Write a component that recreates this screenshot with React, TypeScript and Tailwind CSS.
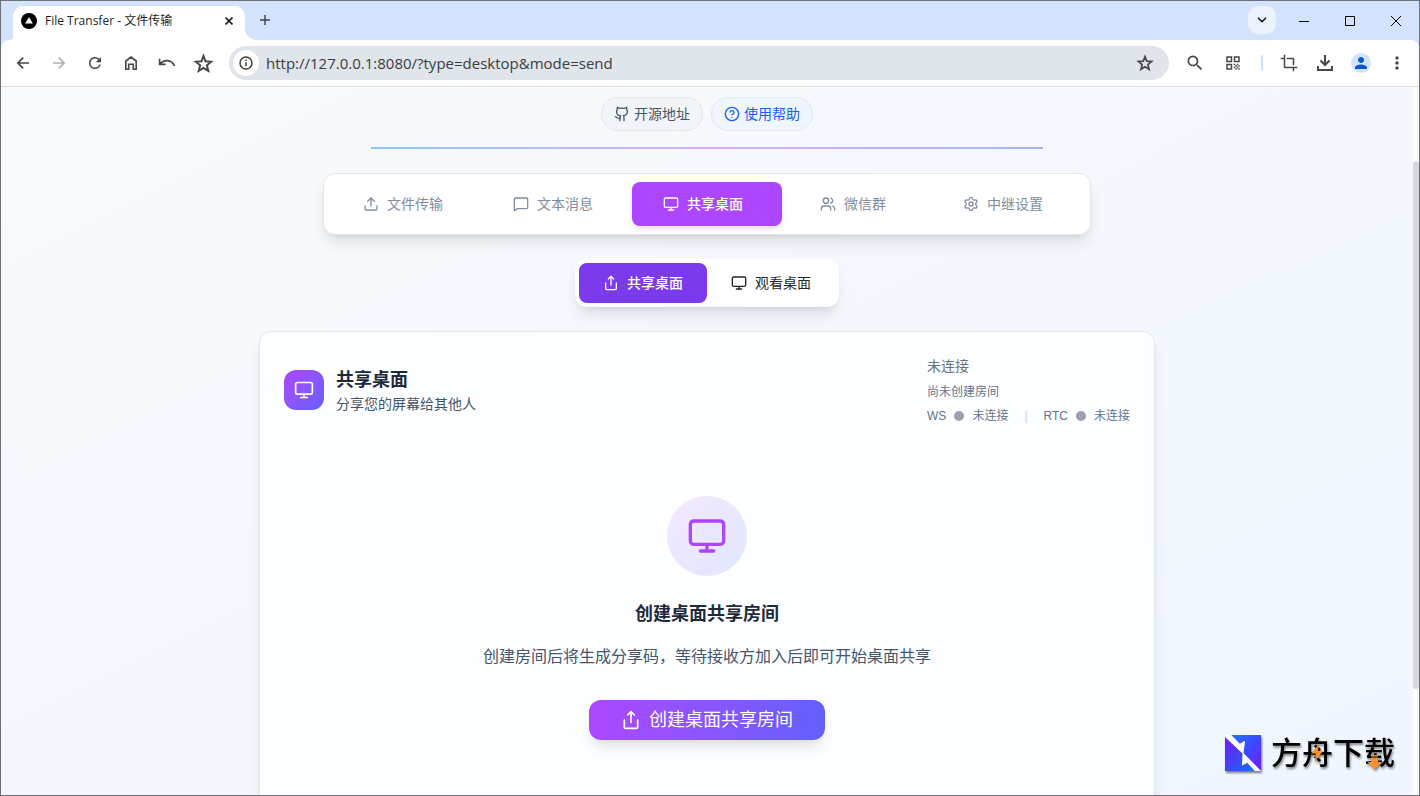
import React, { useState } from 'react';
import {
  ChevronDown,
  Github,
  HelpCircle,
  MessageSquare,
  Monitor,
  Settings,
  Share,
  Upload,
  Users,
} from 'lucide-react';
import { MdCrop, MdMoreVert, MdPerson, MdQrCode, MdRefresh, MdSearch } from 'react-icons/md';

const mainTabs = [
  { id: 'file', label: '文件传输', icon: Upload },
  { id: 'text', label: '文本消息', icon: MessageSquare },
  { id: 'desktop', label: '共享桌面', icon: Monitor },
  { id: 'wechat', label: '微信群', icon: Users },
  { id: 'relay', label: '中继设置', icon: Settings },
];

const ToolButton: React.FC<{ label: string; muted?: boolean; children: React.ReactNode }> = ({ label, muted, children }) => (
  <button
    type="button"
    aria-label={label}
    className={`flex h-8 w-9 shrink-0 items-center justify-center ${muted ? 'text-[#b0b1b3]' : 'text-[#45474a]'}`}
  >
    {children}
  </button>
);

const StarIcon: React.FC<{ className: string }> = ({ className }) => (
  <svg viewBox="0 0 18 18" className={className} fill="none" stroke="currentColor" strokeWidth="1.7">
    <path d="M9 2.600l1.750 4.500 4.850.350-3.700 3.150 1.200 4.700L9 12.700l-4.100 2.600 1.200-4.700-3.700-3.150 4.850-.350z" />
  </svg>
);

const TitleBar: React.FC = () => (
  <div className="flex h-[39px] shrink-0 items-end bg-[#d3e3fd] pl-3">
    <div className="relative flex h-[34px] w-[232px] items-center rounded-t-[10px] bg-white px-2 pb-1">
      <svg viewBox="0 0 4 4" className="absolute bottom-0 -left-1 h-1 w-1" fill="#fff">
        <path d="M4 0v4H0a4 4 0 0 0 4-4z" />
      </svg>
      <svg viewBox="0 0 12 12" className="absolute -right-3 bottom-0 h-3 w-3" fill="#fff">
        <path d="M0 0v12h12A12 12 0 0 1 0 0z" />
      </svg>
      <svg viewBox="0 0 16 16" className="mr-2 h-4 w-4 shrink-0">
        <circle cx="8" cy="8" r="8" fill="#000" />
        <path d="M8 4l3.8 6.6H4.2z" fill="#fff" />
      </svg>
      <span className="flex-1 truncate text-xs text-[#1f1f1f]">File Transfer - 文件传输</span>
      <button type="button" aria-label="关闭标签页" className="flex h-4 w-4 items-center justify-center">
        <svg viewBox="0 0 8 8" className="h-2 w-2" stroke="#1f1f1f" strokeWidth="1.6">
          <path d="M.5.5l7 7M7.5.5l-7 7" />
        </svg>
      </button>
    </div>
    <button type="button" aria-label="新标签页" className="flex h-[34px] w-10 items-center justify-center pb-1.5">
      <svg viewBox="0 0 10 10" className="h-[10px] w-[10px]" stroke="#3c4043" strokeWidth="1.4">
        <path d="M5 0v10M0 5h10" />
      </svg>
    </button>
    <div className="flex-1" />
    <button
      type="button"
      aria-label="搜索标签页"
      className="mr-[5px] mb-1.5 flex h-7 w-7 items-center justify-center rounded-[10px] bg-[#ecf2fe]"
    >
      <ChevronDown className="h-3.5 w-3.5 text-[#1f1f1f]" strokeWidth={3} />
    </button>
    <div className="flex h-full">
      <button type="button" aria-label="最小化" className="flex w-[46px] items-center justify-center">
        <svg viewBox="0 0 10 10" className="h-[10px] w-[10px]" stroke="#000" shapeRendering="crispEdges">
          <path d="M0 5.5h10" />
        </svg>
      </button>
      <button type="button" aria-label="最大化" className="flex w-[46px] items-center justify-center">
        <svg viewBox="0 0 10 10" className="h-[10px] w-[10px]" stroke="#000" fill="none">
          <path d="M.5.5h9v9h-9z" />
        </svg>
      </button>
      <button type="button" aria-label="关闭" className="flex w-[46px] items-center justify-center">
        <svg viewBox="0 0 10 10" className="h-[10px] w-[10px]" stroke="#000">
          <path d="M0 0l10 10M10 0L0 10" />
        </svg>
      </button>
    </div>
  </div>
);

const Toolbar: React.FC = () => (
  <div className="shrink-0 bg-[#d3e3fd]">
    <div className="flex h-[47px] items-center rounded-t-lg border-b border-[#dcdfe0] bg-white px-1">
      <ToolButton label="后退">
        <svg viewBox="0 0 18 18" className="h-[18px] w-[18px]" fill="none" stroke="currentColor" strokeWidth="1.7">
          <path d="M15 9H4M9.2 3.7L3.9 9l5.3 5.3" />
        </svg>
      </ToolButton>
      <ToolButton label="前进" muted>
        <svg viewBox="0 0 18 18" className="h-[18px] w-[18px]" fill="none" stroke="currentColor" strokeWidth="1.7">
          <path d="M3 9h11M8.800 3.700L14.100 9l-5.300 5.300" />
        </svg>
      </ToolButton>
      <ToolButton label="刷新">
        <MdRefresh className="h-[18px] w-[18px]" />
      </ToolButton>
      <ToolButton label="主页">
        <svg viewBox="0 0 18 18" className="h-[18px] w-[18px]" fill="none" stroke="currentColor" strokeWidth="1.6">
          <path d="M3.800 15.200V7L9 3l5.200 4v8.200h-2.900v-5H6.700v5z" />
        </svg>
      </ToolButton>
      <ToolButton label="撤销">
        <svg viewBox="0 0 18 18" className="h-[18px] w-[18px]" fill="none" stroke="currentColor" strokeWidth="1.7">
          <path d="M1.6 4.8v5.6h6M2 10C6 5.400 13.200 4.800 16.600 12" />
        </svg>
      </ToolButton>
      <ToolButton label="收藏夹">
        <StarIcon className="h-[21px] w-[21px]" />
      </ToolButton>
      <div className="ml-2 flex h-[34px] flex-1 items-center rounded-full bg-[#e0e4eb] pr-1.5 pl-1">
        <button
          type="button"
          aria-label="网站信息"
          className="flex h-[26px] w-[26px] shrink-0 items-center justify-center rounded-full bg-white"
        >
          <svg viewBox="0 0 14 14" className="h-3.5 w-3.5" fill="none" stroke="#3c4043" strokeWidth="1.5">
            <circle cx="7" cy="7" r="6" />
            <path d="M7 6.200v4M7 3.600v1.500" />
          </svg>
        </button>
        <input
          type="text"
          aria-label="地址栏"
          defaultValue="http://127.0.0.1:8080/?type=desktop&mode=send"
          className="ml-[7px] min-w-0 flex-1 bg-transparent text-[15px] text-[#3a3d41] outline-none"
        />
        <ToolButton label="收藏此页">
          <StarIcon className="h-[18px] w-[18px]" />
        </ToolButton>
      </div>
      <div className="mr-0.5 ml-2 flex gap-0.5">
        <ToolButton label="缩放">
          <MdSearch className="h-5 w-5" />
        </ToolButton>
        <ToolButton label="二维码">
          <MdQrCode className="h-[18px] w-[18px]" />
        </ToolButton>
      </div>
      <div className="mx-2 h-4 w-0.5 rounded-full bg-[#cfe0fc]" />
      <ToolButton label="截图">
        <MdCrop className="h-[18px] w-[18px]" />
      </ToolButton>
      <ToolButton label="下载">
        <svg viewBox="0 0 18 18" className="h-[18px] w-[18px]" fill="none" stroke="currentColor" strokeWidth="2">
          <path d="M9 1v9.500M4.500 6.500L9 11l4.500-4.500M2 12v4h14v-4" />
        </svg>
      </ToolButton>
      <ToolButton label="个人资料">
        <span className="flex h-5 w-5 items-center justify-center rounded-full bg-[#d3e3fd]">
          <MdPerson className="h-[18px] w-[18px] text-[#0b57d0]" />
        </span>
      </ToolButton>
      <ToolButton label="更多">
        <MdMoreVert className="h-5 w-5" />
      </ToolButton>
    </div>
  </div>
);

const ConnectionStatus: React.FC = () => (
  <div className="space-y-2 font-['Liberation_Sans','Noto_Sans_CJK_SC',sans-serif] text-xs leading-4">
    <div className="text-sm leading-5 text-[#6a7282]">未连接</div>
    <div className="text-slate-500">尚未创建房间</div>
    <div className="flex items-center text-slate-500">
      <span>WS</span>
      <span className="mx-2 h-2.5 w-2.5 rounded-full bg-[#99a1af]" />
      <span>未连接</span>
      <span className="mx-4 text-slate-300">|</span>
      <span>RTC</span>
      <span className="mx-2 h-2.5 w-2.5 rounded-full bg-[#99a1af]" />
      <span>未连接</span>
    </div>
  </div>
);

const Watermark: React.FC = () => (
  <div className="absolute right-6 bottom-6 flex items-center gap-2.5">
    <svg viewBox="0 0 35 35" className="h-9 w-9 drop-shadow-[1px_2px_1px_rgba(0,0,0,0.5)]">
      <defs>
        <linearGradient id="wmUpper" x1="0" y1="0" x2="1" y2="1">
          <stop offset="0" stopColor="#1f7bff" />
          <stop offset="0.5" stopColor="#3a4bff" />
          <stop offset="1" stopColor="#7a14ff" />
        </linearGradient>
        <linearGradient id="wmLower" x1="0" y1="0" x2="1" y2="1">
          <stop offset="0" stopColor="#7a14ff" />
          <stop offset="0.5" stopColor="#3f45f5" />
          <stop offset="1" stopColor="#0a7cff" />
        </linearGradient>
      </defs>
      <path d="M0 0h35v35z" fill="url(#wmUpper)" />
      <path d="M0 0v35h35z" fill="url(#wmLower)" />
      <path d="M0 0h6l8.500 8.500 5-3L18 17.500 35 35h-6l-7.500-8-5 3L17 18 0 2z" fill="#fff" />
    </svg>
    <div className="relative text-[31px] leading-9 font-medium text-black drop-shadow-[1px_2px_1px_rgba(0,0,0,0.45)]">
      方舟下载
      <svg viewBox="0 0 124 36" className="absolute inset-0 h-full w-full" fill="#f9922b">
        <path d="M48 9l-8 9.500h5L43.500 27l8.500-11h-5z" />
        <path d="M100 20h7v1.500h-7zM100 22.500h7V27h3.500l-7 7.500-7-7.500h3.500z" />
      </svg>
    </div>
  </div>
);

const App: React.FC = () => {
  const [activeTab, setActiveTab] = useState('desktop');
  const [mode, setMode] = useState<'share' | 'view'>('share');

  return (
    <div className="flex h-screen flex-col overflow-hidden border border-[#6d7078] font-['Open_Sans','Noto_Sans_CJK_SC',sans-serif]">
      <TitleBar />
      <Toolbar />

      <div className="relative flex min-h-0 flex-1 font-[Inter,'Noto_Sans_CJK_SC',sans-serif]">
        <main className="min-w-0 flex-1 overflow-hidden bg-gradient-to-br from-slate-50 to-blue-50 pt-2.5">
          <header className="mx-auto max-w-2xl">
            <div className="flex justify-center gap-2 text-sm">
              <a
                href="#source"
                className="flex items-center gap-1 rounded-full border border-gray-200 bg-slate-100 px-3 py-1.5 text-slate-600"
              >
                <Github className="h-4 w-4" />
                开源地址
              </a>
              <a
                href="#help"
                className="flex items-center gap-1 rounded-full border border-gray-200 bg-blue-50 px-3 py-1.5 text-blue-600"
              >
                <HelpCircle className="h-4 w-4" />
                使用帮助
              </a>
            </div>
            <div className="mt-4 h-0.5 bg-gradient-to-r from-[#90c5ff] via-[#d5b0ff] to-[#a5b3ff]" />
          </header>

          <nav className="mx-auto mt-6 grid max-w-3xl grid-cols-5 rounded-xl border border-gray-200 bg-white p-2 shadow-lg">
            {mainTabs.map(({ id, label, icon: Icon }) => (
              <button
                key={id}
                type="button"
                onClick={() => setActiveTab(id)}
                className={`flex h-11 items-center justify-center gap-2 rounded-lg pr-2 text-sm ${
                  activeTab === id ? 'bg-[#ad46ff] font-medium text-white shadow-md' : 'text-[#818d9f]'
                }`}
              >
                <Icon className="h-4 w-4" />
                {label}
              </button>
            ))}
          </nav>

          <div className="mt-6 flex justify-center">
            <div className="flex rounded-xl bg-white p-1 shadow-lg">
              <button
                type="button"
                onClick={() => setMode('share')}
                className={`flex h-10 items-center gap-2 rounded-lg px-6 text-sm ${
                  mode === 'share' ? 'bg-[#7c3aed] font-medium text-white' : 'text-[#27272f]'
                }`}
              >
                <Share className="h-4 w-4" />
                共享桌面
              </button>
              <button
                type="button"
                onClick={() => setMode('view')}
                className={`flex h-10 items-center gap-2 rounded-lg px-6 text-sm ${
                  mode === 'view' ? 'bg-[#7c3aed] font-medium text-white' : 'text-[#27272f]'
                }`}
              >
                <Monitor className="h-4 w-4" />
                观看桌面
              </button>
            </div>
          </div>

          <section className="mx-auto mt-6 max-w-4xl rounded-xl border border-gray-200 bg-[#fdfeff] p-6 shadow-lg">
            <div className="flex items-center justify-between">
              <div className="flex items-center gap-3">
                <div className="flex h-10 w-10 items-center justify-center rounded-xl bg-gradient-to-br from-[#ad46ff] to-[#615fff]">
                  <Monitor className="h-5 w-5 text-white" />
                </div>
                <div>
                  <h2 className="text-lg leading-7 font-semibold text-slate-800">共享桌面</h2>
                  <p className="text-sm text-slate-600">分享您的屏幕给其他人</p>
                </div>
              </div>
              <ConnectionStatus />
            </div>

            <div className="mt-6 flex flex-col items-center py-12">
              <div className="flex h-20 w-20 items-center justify-center rounded-full bg-gradient-to-br from-purple-100 to-indigo-100">
                <Monitor className="h-10 w-10 text-[#ad46ff]" />
              </div>
              <h3 className="mt-6 text-lg leading-7 font-semibold text-slate-800">创建桌面共享房间</h3>
              <p className="mt-4 text-base text-slate-600">创建房间后将生成分享码，等待接收方加入后即可开始桌面共享</p>
              <button
                type="button"
                className="mt-8 flex h-10 items-center gap-2 rounded-xl bg-gradient-to-r from-[#ad46ff] to-[#615fff] px-8 text-lg text-white shadow-lg"
              >
                <Share className="h-5 w-5" />
                创建桌面共享房间
              </button>
            </div>
          </section>
        </main>

        <div className="w-1.5 shrink-0 bg-[#fdfdfe] pt-[74px]">
          <div className="h-5/6 rounded-full bg-[#d5d8dd]" />
        </div>
        <Watermark />
      </div>
    </div>
  );
};

export default App;
